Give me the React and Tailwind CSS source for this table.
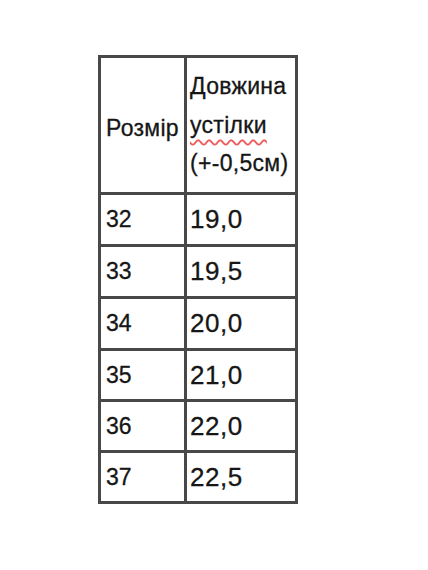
import React from "react";

const rows = [
  ["32", "19,0", "h-[49px]"],
  ["33", "19,5", "h-[49px]"],
  ["34", "20,0", "h-[49px]"],
  ["35", "21,0", "h-[48px]"],
  ["36", "22,0", "h-[48px]"],
  ["37", "22,5", "h-[48px]"],
];

export default function App() {
  return (
    <div className="w-[428px] h-[570px] bg-white overflow-hidden" style={{ fontFamily: '"Liberation Sans", Arial, sans-serif' }}>
      <div className="ml-[98px] mt-[55px] w-[200px] bg-[#484848] p-[3px] grid grid-cols-[83px_108px] gap-[3px] text-[#161616] [-webkit-text-stroke:0.3px_#161616]">
        <div className="bg-white h-[134px] flex items-center pl-[5px] pt-[6px] text-[23px] tracking-[0.3px]">
          Розмір
        </div>
        <div className="bg-white h-[134px] flex flex-col justify-center pl-[3px] text-[23px] leading-[38.5px] tracking-[0.3px]">
          <span>Довжина</span>
          <span>
            <span className="underline decoration-wavy decoration-[#ee5c5c] decoration-[1.5px] underline-offset-[6px]">устілки</span>
          </span>
          <span>(+-0,5см)</span>
        </div>
        {rows.map(([a, b, h]) => (
          <React.Fragment key={a}>
            <div className={`bg-white ${h} flex items-center pl-[5px] text-[23px]`}>{a}</div>
            <div className={`bg-white ${h} flex items-center pl-[3px] text-[26px] tracking-[0.5px]`}>{b}</div>
          </React.Fragment>
        ))}
      </div>
    </div>
  );
}
